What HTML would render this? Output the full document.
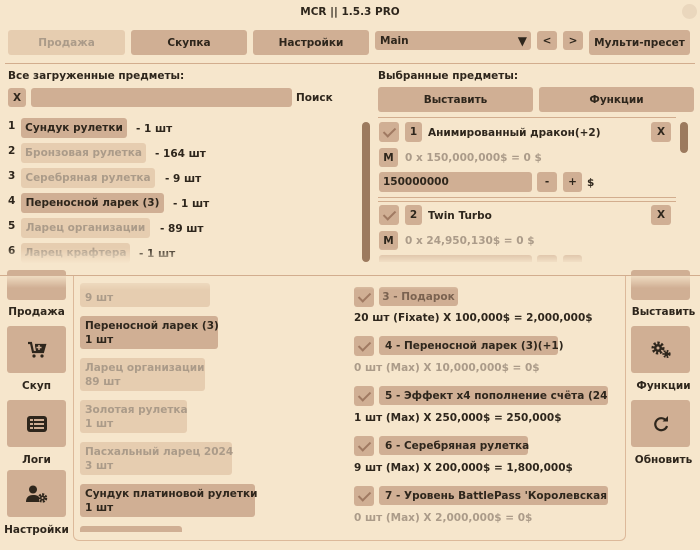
<!DOCTYPE html>
<html><head><meta charset="utf-8"><style>
*{box-sizing:border-box;margin:0;padding:0}
body{width:700px;height:550px;background:#f6e6cc;font-family:"DejaVu Sans","Liberation Sans",sans-serif;font-size:10.5px;font-weight:bold;color:#2e261c;position:relative;overflow:hidden}
.a{position:absolute;white-space:nowrap;margin-top:1px}
.b{position:absolute;background:#d0af94;border-radius:3px;display:flex;align-items:center;justify-content:center;white-space:nowrap}
.l{background:#e6cdb0;color:#ab9b89}
.g{color:#ab9b89}
.t{position:absolute;left:0;display:flex;align-items:center;padding-left:6px;justify-content:flex-start}
.hl{position:absolute;height:1px;background:#d2ad8e}
.fade{position:absolute;background:linear-gradient(rgba(246,230,204,0),#f6e6cc)}
.fadet{position:absolute;background:linear-gradient(#f6e6cc,rgba(246,230,204,0))}
.ck{position:absolute;width:20px;height:20px;background:#d0af94;border-radius:3px}
.ck:after{content:"";position:absolute;left:7px;top:3px;width:5px;height:10px;border:solid #a07a62;border-width:0 2px 2px 0;transform:rotate(45deg)}
</style></head><body>
<div class="a" style="left:0;width:700px;top:5px;text-align:center">MCR || 1.5.3 PRO</div>
<div class="a" style="left:682px;top:3px;width:15px;height:15px;border-radius:50%;background:#ead7bd"></div>

<div class="b l" style="left:8px;top:30px;width:117px;height:25px">Продажа</div>
<div class="b" style="left:131px;top:30px;width:116px;height:25px">Скупка</div>
<div class="b" style="left:253px;top:30px;width:116px;height:25px">Настройки</div>
<div class="b" style="left:375px;top:31px;width:156px;height:19px;justify-content:space-between;padding:0 4px 0 5px"><span>Main</span><span style="font-size:12px">▼</span></div>
<div class="b" style="left:537px;top:31px;width:20px;height:19px">&lt;</div>
<div class="b" style="left:563px;top:31px;width:20px;height:19px">&gt;</div>
<div class="b" style="left:589px;top:30px;width:101px;height:25px">Мульти-пресет</div>
<div class="hl" style="left:5px;width:690px;top:63px"></div>

<div class="a" style="left:8px;top:69px">Все загруженные предметы:</div>
<div class="b" style="left:8px;top:88px;width:18px;height:19px">X</div>
<div class="b" style="left:31px;top:88px;width:261px;height:19px"></div>
<div class="a" style="left:296px;top:91px">Поиск</div>

<div class="a" style="left:8px;top:119px">1</div><div class="b" style="left:21px;top:118px;width:106px;height:20px">Сундук рулетки</div><div class="a" style="left:136px;top:122px">- 1 шт</div>
<div class="a" style="left:8px;top:144px">2</div><div class="b l" style="left:21px;top:143px;width:125px;height:20px">Бронзовая рулетка</div><div class="a" style="left:155px;top:147px">- 164 шт</div>
<div class="a" style="left:8px;top:169px">3</div><div class="b l" style="left:21px;top:168px;width:134px;height:20px">Серебряная рулетка</div><div class="a" style="left:165px;top:172px">- 9 шт</div>
<div class="a" style="left:8px;top:194px">4</div><div class="b" style="left:21px;top:193px;width:143px;height:20px">Переносной ларек (3)</div><div class="a" style="left:173px;top:197px">- 1 шт</div>
<div class="a" style="left:8px;top:219px">5</div><div class="b l" style="left:21px;top:218px;width:129px;height:20px">Ларец организации</div><div class="a" style="left:160px;top:222px">- 89 шт</div>
<div class="a" style="left:8px;top:244px">6</div><div class="b l" style="left:21px;top:243px;width:109px;height:20px">Ларец крафтера</div><div class="a" style="left:139px;top:247px">- 1 шт</div>
<div class="fade" style="left:0;top:248px;width:360px;height:16px"></div>
<div class="a" style="left:362px;top:122px;width:8px;height:140px;background:#9c7a5e;border-radius:4px;margin:0"></div>

<div class="a" style="left:378px;top:69px">Выбранные предметы:</div>
<div class="b" style="left:378px;top:87px;width:155px;height:25px">Выставить</div>
<div class="b" style="left:539px;top:87px;width:155px;height:25px">Функции</div>
<div class="hl" style="left:378px;width:298px;top:117px"></div>

<div class="ck" style="left:379px;top:122px"></div>
<div class="b" style="left:405px;top:122px;width:17px;height:20px">1</div>
<div class="a" style="left:428px;top:126px">Анимированный дракон(+2)</div>
<div class="b" style="left:651px;top:122px;width:20px;height:20px">X</div>
<div class="b" style="left:379px;top:148px;width:19px;height:19px">M</div>
<div class="a g" style="left:405px;top:151px">0 x 150,000,000$ = 0 $</div>
<div class="b" style="left:379px;top:172px;width:153px;height:20px;justify-content:flex-start;padding-left:4px">150000000</div>
<div class="b" style="left:537px;top:172px;width:20px;height:20px">-</div>
<div class="b" style="left:563px;top:172px;width:19px;height:20px">+</div>
<div class="a" style="left:587px;top:176px">$</div>
<div class="hl" style="left:378px;width:298px;top:197px"></div>
<div class="hl" style="left:378px;width:298px;top:201px"></div>
<div class="ck" style="left:379px;top:205px"></div>
<div class="b" style="left:405px;top:205px;width:17px;height:20px">2</div>
<div class="a" style="left:428px;top:209px">Twin Turbo</div>
<div class="b" style="left:651px;top:205px;width:20px;height:20px">X</div>
<div class="b" style="left:379px;top:231px;width:19px;height:19px">M</div>
<div class="a g" style="left:405px;top:234px">0 x 24,950,130$ = 0 $</div>
<div class="b" style="left:379px;top:255px;width:153px;height:20px"></div>
<div class="b" style="left:537px;top:255px;width:20px;height:20px"></div>
<div class="b" style="left:563px;top:255px;width:19px;height:20px"></div>
<div class="fade" style="left:375px;top:248px;width:320px;height:16px"></div>
<div class="a" style="left:375px;top:262px;width:320px;height:13px;background:#f6e6cc;margin:0"></div>
<div class="a" style="left:680px;top:122px;width:8px;height:31px;background:#9c7a5e;border-radius:4px;margin:0"></div>

<div class="hl" style="left:0;width:700px;top:275px"></div>

<!-- left sidebar -->
<div class="b" style="left:7px;top:270px;width:59px;height:30px"></div>
<div class="fadet" style="left:0;top:276px;width:70px;height:12px;opacity:.8"></div>
<div class="a" style="left:0;width:73px;text-align:center;top:305px">Продажа</div>
<div class="b" style="left:7px;top:326px;width:59px;height:47px"><svg width="20" height="20" viewBox="0 0 20 20"><path d="M1 3h3l2 9h10l2-7H8" fill="none" stroke="#2e261c" stroke-width="2.2"/><path d="M8 6h9l-1.5 5H9z" fill="#2e261c"/><path d="M12 5v5M9.5 7.5h5" stroke="#d0af94" stroke-width="1.5"/><circle cx="7" cy="16" r="1.6" fill="#2e261c"/><circle cx="15" cy="16" r="1.6" fill="#2e261c"/></svg></div>
<div class="a" style="left:0;width:73px;text-align:center;top:379px">Скуп</div>
<div class="b" style="left:7px;top:400px;width:59px;height:47px"><svg width="20" height="16" viewBox="0 0 20 16"><rect x="0" y="0" width="20" height="16" rx="3" fill="#2e261c"/><g fill="#d0af94"><rect x="3" y="3" width="3" height="2"/><rect x="3" y="7" width="3" height="2"/><rect x="3" y="11" width="3" height="2"/><rect x="7" y="3" width="10" height="2"/><rect x="7" y="7" width="10" height="2"/><rect x="7" y="11" width="10" height="2"/></g></svg></div>
<div class="a" style="left:0;width:73px;text-align:center;top:453px">Логи</div>
<div class="b" style="left:7px;top:470px;width:59px;height:47px"><svg width="22" height="18" viewBox="0 0 22 18"><circle cx="7" cy="4.5" r="4" fill="#2e261c"/><path d="M0 17c0-5 3-7 7-7s5 1 6 2v5z" fill="#2e261c"/><circle cx="16.5" cy="13" r="3.5" fill="none" stroke="#2e261c" stroke-width="2.5" stroke-dasharray="2 1.2"/><circle cx="16.5" cy="13" r="2.5" fill="#2e261c"/><circle cx="16.5" cy="13" r="1" fill="#d0af94"/></svg></div>
<div class="a" style="left:0;width:73px;text-align:center;top:523px">Настройки</div>

<!-- middle panel -->
<div class="a" style="left:73px;top:276px;width:553px;height:265px;border-left:1px solid #dcb99a;border-bottom:1px solid #dcb99a;border-right:1px solid #dcb99a;border-radius:0 0 6px 6px;margin:0"></div>
<div class="b l" style="left:80px;top:283px;width:130px;height:24px;align-items:flex-end;justify-content:flex-start;padding:0 0 3px 5px">9 шт</div>
<div class="fadet" style="left:76px;top:276px;width:260px;height:14px"></div>
<div class="b" style="left:80px;top:316px;width:138px;height:33px;flex-direction:column;align-items:flex-start;padding-left:5px;line-height:14px"><span>Переносной ларек (3)</span><span>1 шт</span></div>
<div class="b l" style="left:80px;top:358px;width:125px;height:33px;flex-direction:column;align-items:flex-start;padding-left:5px;line-height:14px"><span>Ларец организации</span><span>89 шт</span></div>
<div class="b l" style="left:80px;top:400px;width:107px;height:33px;flex-direction:column;align-items:flex-start;padding-left:5px;line-height:14px"><span>Золотая рулетка</span><span>1 шт</span></div>
<div class="b l" style="left:80px;top:442px;width:152px;height:33px;flex-direction:column;align-items:flex-start;padding-left:5px;line-height:14px"><span>Пасхальный ларец 2024</span><span>3 шт</span></div>
<div class="b" style="left:80px;top:484px;width:175px;height:33px;flex-direction:column;align-items:flex-start;padding-left:5px;line-height:14px"><span>Сундук платиновой рулетки</span><span>1 шт</span></div>
<div class="b" style="left:80px;top:526px;width:102px;height:6px;border-radius:3px 3px 0 0"></div>

<!-- right list -->
<div class="ck" style="left:354px;top:287px"></div>
<div class="b" style="left:379px;top:287px;width:79px;height:19px;color:#7a6250">3 - Подарок</div>
<div class="fadet" style="left:350px;top:276px;width:270px;height:14px"></div>
<div class="a" style="left:354px;top:311px">20 шт (Fixate) X 100,000$ = 2,000,000$</div>
<div class="ck" style="left:354px;top:336px"></div>
<div class="b t" style="left:379px;top:336px;width:179px;height:19px">4 - Переносной ларек (3)(+1)</div>
<div class="a g" style="left:354px;top:361px">0 шт (Max) X 10,000,000$ = 0$</div>
<div class="ck" style="left:354px;top:386px"></div>
<div class="b t" style="left:379px;top:386px;width:229px;height:19px;overflow:hidden">5 - Эффект x4 пополнение счёта (24 ч</div>
<div class="a" style="left:354px;top:411px">1 шт (Max) X 250,000$ = 250,000$</div>
<div class="ck" style="left:354px;top:436px"></div>
<div class="b t" style="left:379px;top:436px;width:149px;height:19px">6 - Серебряная рулетка</div>
<div class="a" style="left:354px;top:461px">9 шт (Max) X 200,000$ = 1,800,000$</div>
<div class="ck" style="left:354px;top:486px"></div>
<div class="b t" style="left:379px;top:486px;width:229px;height:19px;overflow:hidden">7 - Уровень BattlePass 'Королевская Би</div>
<div class="a g" style="left:354px;top:511px">0 шт (Max) X 2,000,000$ = 0$</div>

<!-- right sidebar -->
<div class="b" style="left:631px;top:270px;width:59px;height:30px"></div>
<div class="fadet" style="left:628px;top:276px;width:70px;height:12px;opacity:.8"></div>
<div class="a" style="left:627px;width:73px;text-align:center;top:305px">Выставить</div>
<div class="b" style="left:631px;top:326px;width:59px;height:47px"><svg width="22" height="18" viewBox="0 0 22 18"><circle cx="8" cy="7" r="5" fill="none" stroke="#2e261c" stroke-width="3" stroke-dasharray="2.2 1.6"/><circle cx="8" cy="7" r="4" fill="#2e261c"/><circle cx="8" cy="7" r="1.5" fill="#d0af94"/><circle cx="16.5" cy="13" r="3" fill="none" stroke="#2e261c" stroke-width="2.2" stroke-dasharray="1.6 1.2"/><circle cx="16.5" cy="13" r="2.2" fill="#2e261c"/></svg></div>
<div class="a" style="left:627px;width:73px;text-align:center;top:379px">Функции</div>
<div class="b" style="left:631px;top:400px;width:59px;height:47px"><svg width="16" height="16" viewBox="0 0 16 16"><path d="M13 4.5A6 6 0 1 0 14 10" fill="none" stroke="#2e261c" stroke-width="2.2"/><path d="M9.5 5.5H15V0z" fill="#2e261c"/></svg></div>
<div class="a" style="left:627px;width:73px;text-align:center;top:453px">Обновить</div>
</body></html>
